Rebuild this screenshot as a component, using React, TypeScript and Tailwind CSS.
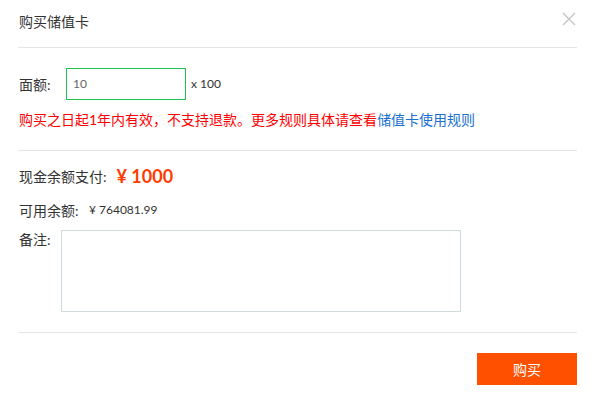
import React from "react";

export default function App() {
  const font = { fontFamily: 'Lato, "Noto Sans CJK SC", sans-serif' };
  return (
    <div className="w-[596px] h-[402px] bg-white text-[#333]" style={font}>
      <div className="pl-[18px] pr-[19px]">
        <div className="relative h-[48px] border-b border-[#e5e5e5] pt-[12px]">
          <div className="pl-[1px] text-[14px] leading-[20px] text-[#333]">购买储值卡</div>
          <svg className="absolute right-[1px] top-[12px]" width="14" height="14" viewBox="0 0 14 14">
            <path d="M1 1L13 13M13 1L1 13" stroke="#c8c8c8" strokeWidth="1.5" />
          </svg>
        </div>
        <div className="border-b border-[#e5e5e5] pt-[20px] pb-[20px]">
          <div className="flex items-center h-[32px]">
            <span className="pl-[1px] text-[14px] w-[48px]">面额:</span>
            <div className="w-[120px] h-[32px] border border-[#1fc14e] flex items-center pl-[6px] text-[12px] text-[#666]">10</div>
            <span className="ml-[5px] text-[12px] text-[#333]">x 100</span>
          </div>
          <div className="mt-[10px] pl-[1px] text-[14px] leading-[20px] text-[#ff0000]">
            购买之日起1年内有效，不支持退款。更多规则具体请查看<span className="text-[#1a6fd1]">储值卡使用规则</span>
          </div>
        </div>
        <div className="border-b border-[#e5e5e5] pt-[13px] pb-[20px]">
          <div className="flex items-center h-[24px] pl-[1px]">
            <span className="text-[14px]">现金余额支付:</span>
            <span className="ml-[10px] text-[18px] font-bold text-[#ff3c00]">¥ 1000</span>
          </div>
          <div className="mt-[12px] flex items-center h-[20px] pl-[1px]">
            <span className="text-[14px] w-[70px]">可用余额:</span>
            <span className="text-[12px]">¥ 764081.99</span>
          </div>
          <div className="mt-[10px] flex items-start pl-[1px]">
            <span className="text-[14px] leading-[20px] w-[42px]">备注:</span>
            <textarea className="w-[400px] h-[82px] border border-[#cddcdc] resize-none outline-none" />
          </div>
        </div>
        <div className="flex justify-end pt-[20px]">
          <button className="w-[100px] h-[32px] bg-[#ff5000] text-white text-[14px]">购买</button>
        </div>
      </div>
    </div>
  );
}
